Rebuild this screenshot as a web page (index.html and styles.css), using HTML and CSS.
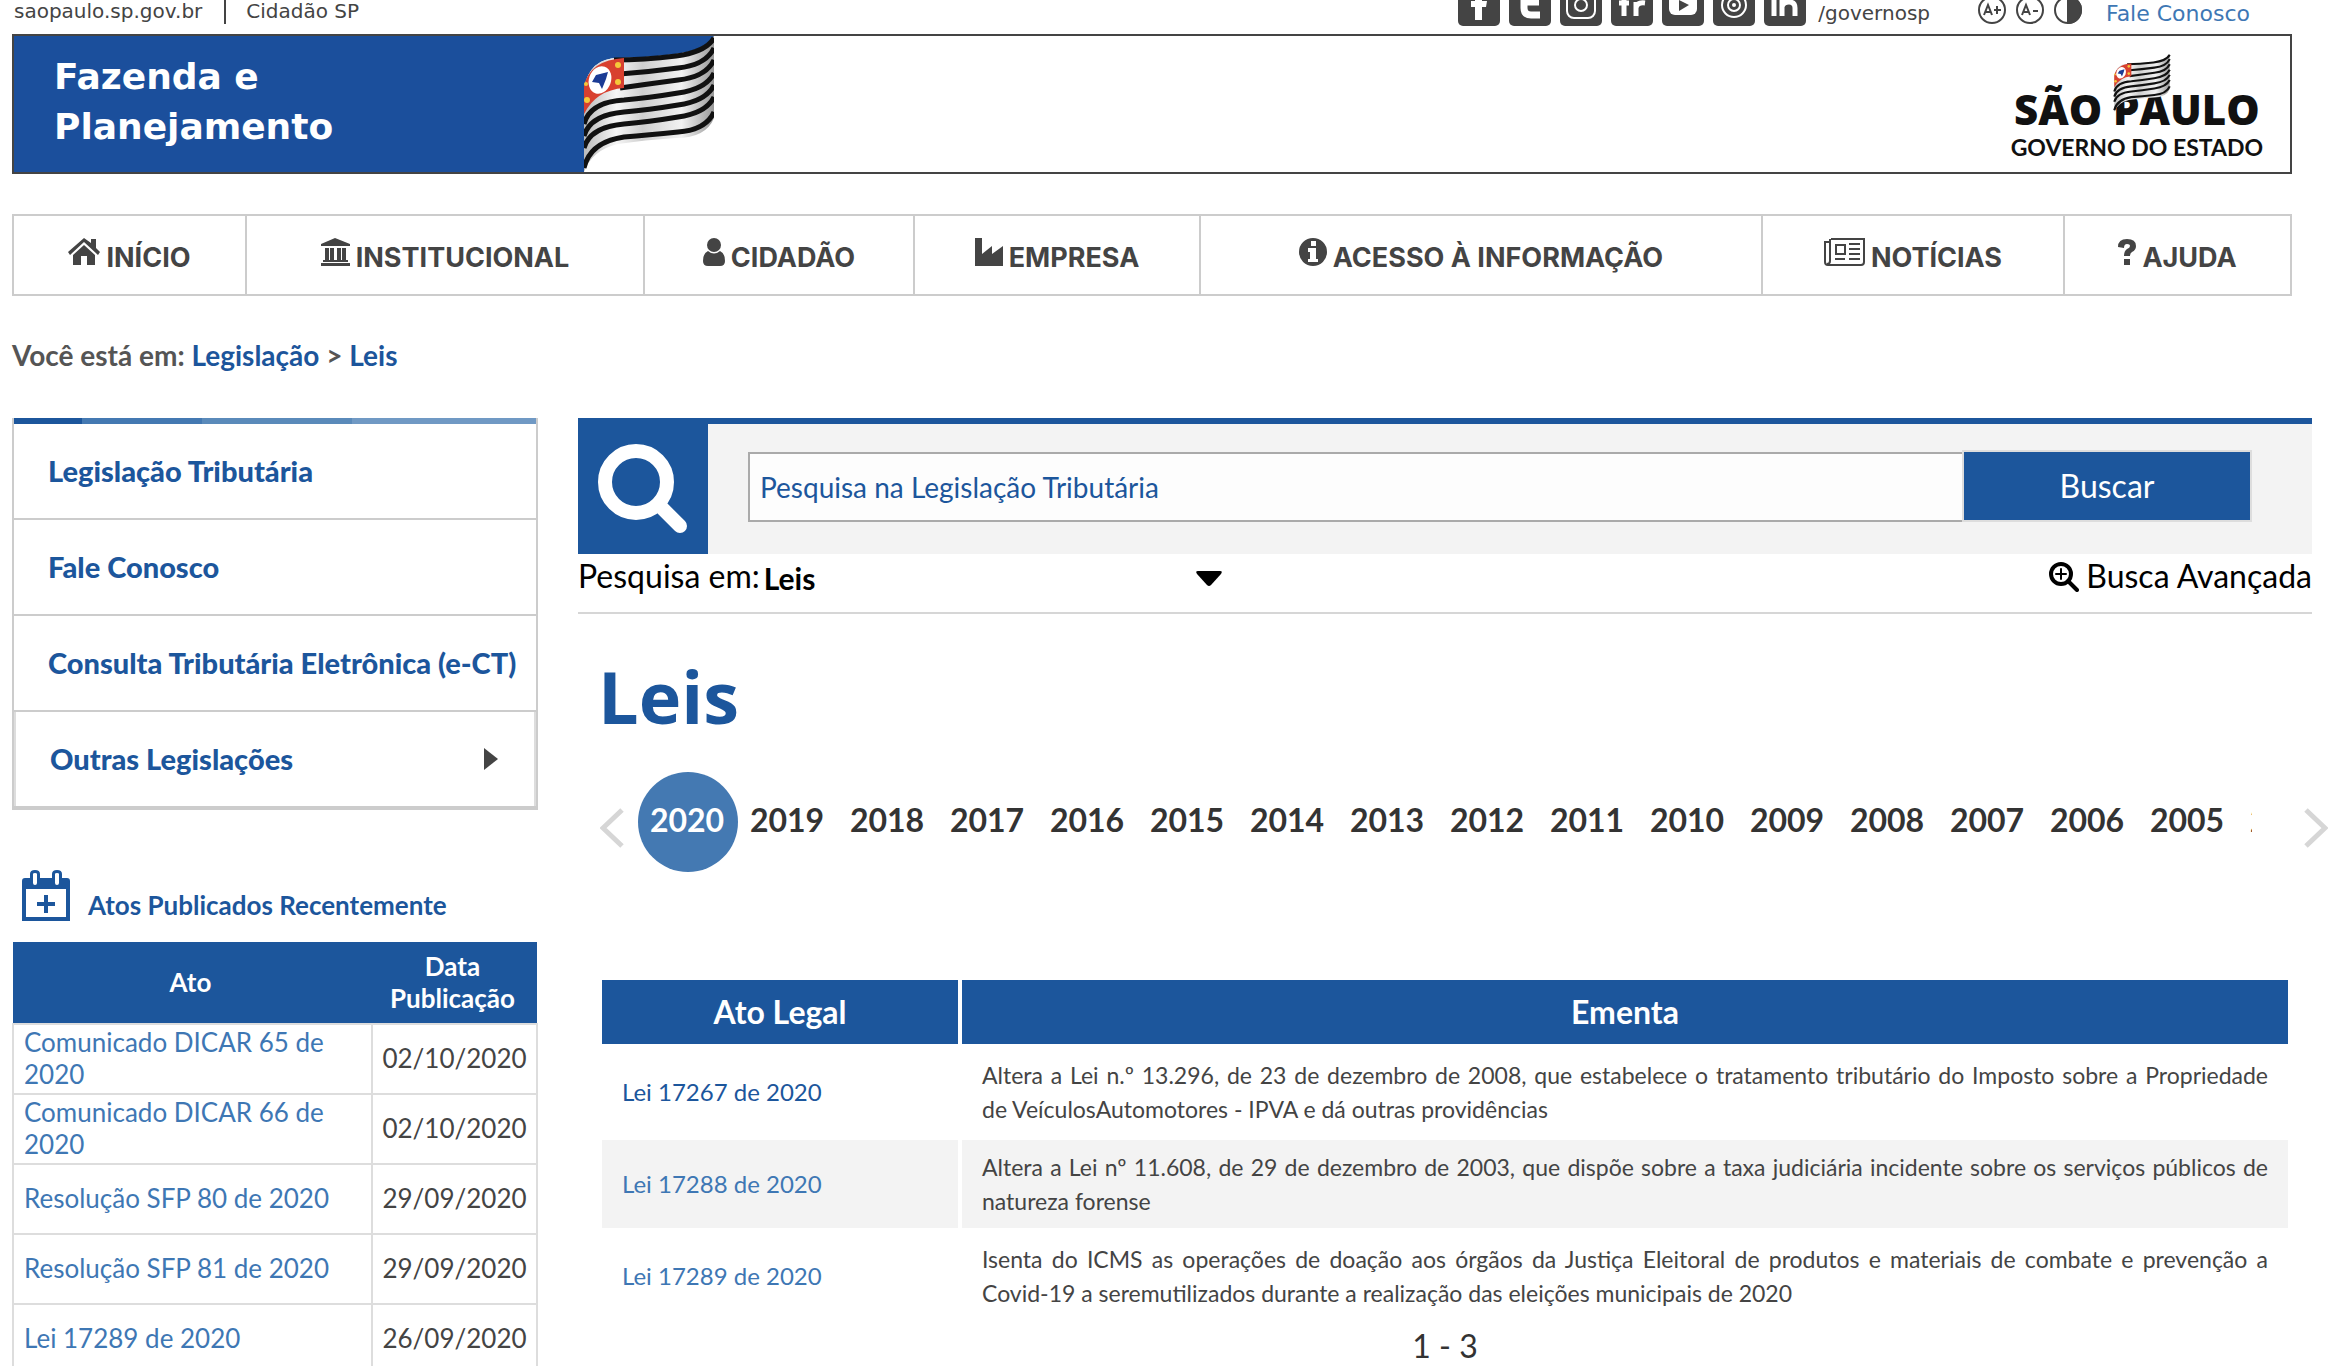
FILE: index.html
```html
<!DOCTYPE html>
<html lang="pt-BR">
<head>
<meta charset="utf-8">
<title>Leis - Legislação Tributária</title>
<link rel="stylesheet" href="styles.css">
</head>
<body>
<svg class="sprite" aria-hidden="true">
  <defs>
    <linearGradient id="cloth" x1="0" x2="1" y1="0" y2="0">
      <stop offset="0" stop-color="#bbb"/><stop offset=".25" stop-color="#f6f6f6"/><stop offset=".45" stop-color="#cfcfcf"/><stop offset=".75" stop-color="#f2f2f2"/><stop offset="1" stop-color="#999"/>
    </linearGradient>
    <symbol id="flag" viewBox="0 0 130 136">
      <path d="M0 136V52Q6 22 34 22Q60 22 92 18Q122 14 130 0V82Q122 102 92 102Q60 104 34 108Q8 114 0 136Z" fill="url(#cloth)"/>
      <g fill="none" stroke="#111" stroke-width="5">
        <path d="M30 24Q60 24 92 20Q122 16 130 2"/>
        <path d="M36 38Q64 36 94 32Q122 29 130 12"/>
        <path d="M36 52Q64 48 94 44Q122 41 130 24"/>
        <path d="M0 88Q6 66 40 64Q64 62 94 57Q122 53 130 37"/>
        <path d="M0 100Q6 79 40 76Q64 74 94 69Q122 65 130 49"/>
        <path d="M0 112Q6 91 40 88Q64 86 94 81Q122 77 130 61"/>
        <path d="M0 132Q6 106 40 101Q64 99 94 96Q122 94 130 76"/>
      </g>
      <path d="M0 78V50Q6 24 40 22V52Q12 54 0 78Z" fill="#d8402f"/>
      <ellipse cx="16" cy="44" rx="11" ry="14" fill="#fff" transform="rotate(20 16 44)"/>
      <path d="M8 46L12 39L24 36L22 43L18 53L15 47Z" fill="#1b3b94"/>
      <g fill="#f5c93a"><circle cx="34" cy="29" r="3"/><circle cx="34" cy="46" r="3"/><circle cx="3" cy="64" r="3"/><circle cx="2" cy="48" r="2"/></g>
    </symbol>
  </defs>
</svg>

<div class="topbar">
  <nav class="topbar-left">
    <a href="#">saopaulo.sp.gov.br</a>
    <a href="#" class="ruled">Cidadão SP</a>
  </nav>
  <div class="topbar-right">
    <div class="social">
      <a href="#" aria-label="Facebook"><svg viewBox="0 0 42 42"><rect width="42" height="42" rx="5"/><path class="w" d="M17 36V23h-4v-6h4v-4c0-5 3-7 7-7h5v6h-3c-2 0-2 1-2 2v3h5l-1 6h-4v13z"/></svg></a>
      <a href="#" aria-label="Twitter"><svg viewBox="0 0 42 42"><rect width="42" height="42" rx="5"/><path class="ws" d="M15 8v16q0 7 7 7h9M15 18h15"/></svg></a>
      <a href="#" aria-label="Instagram"><svg viewBox="0 0 42 42"><rect width="42" height="42" rx="5"/><rect class="wl" x="7" y="7" width="28" height="27" rx="7"/><circle class="wl" cx="21" cy="21" r="6"/></svg></a>
      <a href="#" aria-label="Flickr"><svg viewBox="0 0 42 42"><rect width="42" height="42" rx="5"/><path class="wm" d="M13 32V12q0-5 6-5M8 19h10M25 32V18M25 24q1-6 9-5"/></svg></a>
      <a href="#" aria-label="YouTube"><svg viewBox="0 0 42 42"><rect width="42" height="42" rx="5"/><rect class="w" x="7" y="9" width="28" height="22" rx="6"/><path d="M17 16v11l10-6z"/></svg></a>
      <a href="#" aria-label="Podcast"><svg viewBox="0 0 42 42"><rect width="42" height="42" rx="5"/><circle class="wl" cx="21" cy="21" r="12"/><circle class="wl" cx="21" cy="21" r="6"/><circle class="w" cx="21" cy="21" r="2"/></svg></a>
      <a href="#" aria-label="LinkedIn"><svg viewBox="0 0 42 42"><rect width="42" height="42" rx="5"/><path class="wm" d="M10 16v16M10 8v4M18 32V16M18 23q1-5 7-5 6 0 6 6v8"/></svg></a>
    </div>
    <span class="handle">/governosp</span>
    <div class="access">
      <button aria-label="Aumentar fonte"><svg viewBox="0 0 28 28"><circle cx="14" cy="14" r="13"/><path d="M6 19l4-10 4 10M8 16h5M16 14h7M19 10v8"/></svg></button>
      <button aria-label="Diminuir fonte"><svg viewBox="0 0 28 28"><circle cx="14" cy="14" r="13"/><path d="M6 19l4-10 4 10M8 16h5M17 15h5"/></svg></button>
      <button aria-label="Contraste"><svg viewBox="0 0 28 28"><circle cx="14" cy="14" r="13"/><path class="half" d="M14 1a13 13 0 0 1 0 26z"/></svg></button>
    </div>
    <a class="contact" href="#">Fale Conosco</a>
  </div>
</div>

<header class="banner">
  <div class="banner-title">Fazenda e<br>Planejamento</div>
  <svg class="banner-flag" viewBox="0 0 130 136"><path class="banner-fill" d="M0 0H130Q122 14 92 18Q60 22 34 22Q6 22 0 52Z"/><use href="#flag"/></svg>
  <div class="gov-logo">
    <svg class="gov-flag"><use href="#flag"/></svg>
    <span class="gov-name">SÃO PAULO</span>
    <span class="gov-sub">GOVERNO DO ESTADO</span>
  </div>
</header>

<nav class="mainnav">
  <a href="#"><svg width="32" height="28" viewBox="0 0 32 28"><path d="M16 0L0 14l2 3L16 4l14 13 2-3-4-4V1h-5v4zM16 7L5 17v10h8v-9h6v9h8V17z"/></svg>INÍCIO</a>
  <a href="#"><svg width="29" height="28" viewBox="0 0 29 28"><path d="M14 0L0 6v2h29V6zM4 10h4v12H4zM9 10h4v12H9zM16 10h4v12h-4zM21 10h4v12h-4zM2 22h25v2H2zM0 25h29v3H0z"/></svg>INSTITUCIONAL</a>
  <a href="#"><svg width="22" height="28" viewBox="0 0 22 28"><ellipse cx="11" cy="7" rx="7" ry="7"/><path d="M5 13q6 5 12 0 5 2 5 10 0 5-5 5H5q-5 0-5-5 0-8 5-10z"/></svg>CIDADÃO</a>
  <a href="#"><svg width="28" height="28" viewBox="0 0 28 28"><path d="M0 0h7v16l10-8v8l11-8v20H0z"/></svg>EMPRESA</a>
  <a href="#"><svg width="28" height="28" viewBox="0 0 28 28"><path fill-rule="evenodd" d="M14 0a14 14 0 1 1 0 28a14 14 0 0 1 0-28zM12 3v5h5V3zM9 10v4h2v7H9v3h10v-3h-2V10z"/></svg>ACESSO À INFORMAÇÃO</a>
  <a href="#"><svg width="41" height="28" viewBox="0 0 41 28"><path fill="none" stroke="currentColor" stroke-width="2" d="M7 1h33v23q0 3-3 3H4q-3 0-3-3V4h5M6 1v22q0 3-3 3M12 7h9v9h-9zM25 6h11M25 11h11M25 16h11M11 21h10M25 21h11"/></svg>NOTÍCIAS</a>
  <a href="#"><svg width="18" height="27" viewBox="0 0 18 27"><path d="M6 20h6v6H6zM0 8q0-8 9-8t9 7q0 4-4 6-2 1-2 4H6q0-5 3-7 3-1 3-3t-3-2q-3 0-3 4z"/></svg>AJUDA</a>
</nav>

<p class="crumbs">Você está em: <a href="#">Legislação</a> &gt; <a href="#">Leis</a></p>

<div class="layout">
  <aside class="sidebar">
    <nav class="sidenav">
      <div class="stripe"><i></i><i></i><i></i><i></i></div>
      <a href="#">Legislação Tributária</a>
      <a href="#">Fale Conosco</a>
      <a href="#">Consulta Tributária Eletrônica (e-CT)</a>
      <a href="#" class="more">Outras Legislações<svg width="14" height="22" viewBox="0 0 14 22"><path d="M0 0L14 11L0 22z"/></svg></a>
    </nav>

    <h2 class="recent-title">
      <svg width="48" height="52" viewBox="0 0 48 52"><path fill="none" stroke="currentColor" stroke-width="4" d="M2 16V49h44V16M24 25v18M15 34h18"/><path fill="currentColor" fill-rule="evenodd" d="M3 8h5V4q0-4 5-4t5 4v4h12V4q0-4 5-4t5 4v4h5q3 0 3 3v8H0v-8q0-3 3-3zM11 4v9q0 2 2 2t2-2V4q0-1-2-1t-2 1zM33 4v9q0 2 2 2t2-2V4q0-1-2-1t-2 1z"/></svg>
      <span>Atos Publicados Recentemente</span>
    </h2>
    <table class="recent">
      <thead><tr><th scope="col">Ato</th><th scope="col" class="date">Data Publicação</th></tr></thead>
      <tbody>
        <tr><td><a href="#">Comunicado DICAR 65 de 2020</a></td><td class="date">02/10/2020</td></tr>
        <tr><td><a href="#">Comunicado DICAR 66 de 2020</a></td><td class="date">02/10/2020</td></tr>
        <tr><td><a href="#">Resolução SFP 80 de 2020</a></td><td class="date">29/09/2020</td></tr>
        <tr><td><a href="#">Resolução SFP 81 de 2020</a></td><td class="date">29/09/2020</td></tr>
        <tr><td><a href="#">Lei 17289 de 2020</a></td><td class="date">26/09/2020</td></tr>
      </tbody>
    </table>
  </aside>

  <main class="content">
    <form class="search">
      <div class="search-icon"><svg width="90" height="90" viewBox="0 0 90 90"><circle cx="38" cy="38" r="31"/><path d="M61 61L82 82"/></svg></div>
      <div class="search-fields">
        <input type="text" aria-label="Pesquisa" placeholder="Pesquisa na Legislação Tributária">
        <button type="button">Buscar</button>
      </div>
    </form>
    <div class="scope">
      <label for="scope">Pesquisa em:</label>
      <div class="scope-pick">
        <select id="scope"><option>Leis</option></select>
        <svg width="26" height="15" viewBox="0 0 26 15"><path d="M2 0h22q3 0 1 3L15 14q-2 2-4 0L1 3q-2-3 1-3z"/></svg>
      </div>
      <a href="#" class="advanced"><svg width="30" height="30" viewBox="0 0 30 30"><circle cx="12" cy="12" r="10"/><path d="M19 19L28 28"/><path class="thin" d="M12 7v10M7 12h10"/></svg>Busca Avançada</a>
    </div>

    <h1>Leis</h1>

    <div class="years">
      <button aria-label="Anos seguintes"><svg width="24" height="40" viewBox="0 0 24 40"><path d="M22 2L3 20L22 38"/></svg></button>
      <ul>
        <li><a href="#" class="current">2020</a></li><li><a href="#">2019</a></li><li><a href="#">2018</a></li><li><a href="#">2017</a></li><li><a href="#">2016</a></li><li><a href="#">2015</a></li><li><a href="#">2014</a></li><li><a href="#">2013</a></li><li><a href="#">2012</a></li><li><a href="#">2011</a></li><li><a href="#">2010</a></li><li><a href="#">2009</a></li><li><a href="#">2008</a></li><li><a href="#">2007</a></li><li><a href="#">2006</a></li><li><a href="#">2005</a></li><li><a href="#">2004</a></li>
      </ul>
      <button aria-label="Anos anteriores"><svg width="24" height="40" viewBox="0 0 24 40"><path d="M2 2L21 20L2 38"/></svg></button>
    </div>

    <table class="laws">
      <thead><tr><th scope="col" class="act">Ato Legal</th><th scope="col">Ementa</th></tr></thead>
      <tbody>
        <tr><td><a href="#" class="hot">Lei 17267 de 2020</a></td><td class="summary">Altera a Lei n.º 13.296, de 23 de dezembro de 2008, que estabelece o tratamento tributário do Imposto sobre a Propriedade de&nbsp;VeículosAutomotores - IPVA e dá outras providências</td></tr>
        <tr><td><a href="#">Lei 17288 de 2020</a></td><td class="summary">Altera a Lei nº 11.608, de 29 de dezembro de 2003, que dispõe sobre a taxa judiciária incidente sobre os serviços públicos de natureza forense</td></tr>
        <tr><td><a href="#">Lei 17289 de 2020</a></td><td class="summary">Isenta do ICMS as operações de doação aos órgãos da Justiça Eleitoral de produtos e materiais de combate e prevenção a Covid-19 a seremutilizados durante a realização das eleições municipais de 2020</td></tr>
      </tbody>
    </table>
    <p class="range">1 - 3</p>
  </main>
</div>
</body>
</html>
```
FILE: styles.css
```css
* { box-sizing: border-box; }

html { overflow: hidden; }

body {
  margin: 0;
  padding: 0 36px 0 12px;
  background: #fff;
  color: #444;
  font-family: Lato, "Open Sans", sans-serif;
  font-size: 26px;
  line-height: 32px;
}

a { color: #3e77b4; text-decoration: none; }
button { padding: 0; border: 0; background: none; cursor: pointer; }
svg { display: block; flex: none; }
.sprite { position: absolute; width: 0; height: 0; }

/* Government bar */
.topbar {
  display: flex;
  justify-content: space-between;
  height: 34px;
  padding: 0 62px 0 2px;
  font-family: "DejaVu Sans", Verdana, sans-serif;
  font-size: 20px;
  line-height: 22px;
}
.topbar-left { display: flex; gap: 22px; }
.topbar-left a { color: #444; }
.topbar-left .ruled { height: 24px; padding-left: 20px; border-left: 2px solid #444; }
.topbar-right { display: flex; }
.social { display: flex; gap: 9px; height: 26px; align-items: flex-end; overflow: hidden; }
.social svg { width: 42px; height: 42px; }
.social rect, .social path { fill: #444; }
.social .w { fill: #fff; }
.social .ws, .social .wm, .social .wl { fill: none; stroke: #fff; stroke-width: 7; }
.social .wm { stroke-width: 5; }
.social .wl { stroke-width: 2; }
.handle { margin: 0 48px 0 12px; line-height: 26px; }
.access { display: flex; gap: 10px; height: 24px; align-items: flex-end; }
.access svg { width: 28px; height: 28px; fill: none; stroke: #444; stroke-width: 2; }
.access .half { fill: #444; }
.contact { margin-left: 24px; font-size: 22px; line-height: 28px; }

/* Banner */
.banner {
  display: flex;
  height: 140px;
  margin-right: 20px;
  border: 2px solid #444;
  margin-bottom: 40px;
}
.banner-title {
  width: 570px;
  padding: 16px 40px;
  background: #1b4f9c;
  color: #fff;
  font: bold 36px/50px "DejaVu Sans", Verdana, sans-serif;
}
.banner-flag { width: 130px; height: 136px; }
.banner-fill { fill: #1b4f9c; }
.gov-logo {
  position: relative;
  display: flex;
  flex-direction: column;
  align-items: center;
  margin-left: auto;
  margin-right: 27px;
  padding-top: 46px;
  color: #111;
}
.gov-name { font: 800 42px/54px "Open Sans", sans-serif; }
.gov-sub { font-size: 23px; line-height: 22px; font-weight: 700; }
.gov-flag { position: absolute; left: 102px; top: 18px; width: 58px; height: 58px; }

/* Main navigation */
.mainnav {
  display: grid;
  grid-template-columns: 231fr 398fr 270fr 286fr 562fr 302fr 227fr;
  height: 82px;
  margin-right: 20px;
  border: 2px solid #ccc;
}
.mainnav a {
  display: flex;
  justify-content: center;
  align-items: flex-end;
  gap: 6px;
  padding-bottom: 20px;
  color: #444;
  font-family: Inter, Lato, sans-serif;
  font-size: 27px;
  font-weight: 700;
  line-height: 32px;
}
.mainnav a + a { border-left: 2px solid #ccc; }
.mainnav svg { margin-bottom: 8px; fill: currentColor; }

.crumbs { margin: 43px 0 47px; font-size: 28px; line-height: 32px; font-weight: 700; color: #555; }
.crumbs a { color: #1c559b; }

/* Columns */
.layout { display: grid; grid-template-columns: 526px 1fr; gap: 40px; }

.sidenav { border: 2px solid #ccc; border-top: 0; border-bottom-width: 4px; }
.stripe { display: grid; grid-template-columns: 68fr 120fr 150fr 184fr; height: 6px; }
.stripe i:nth-child(1) { background: #1c569c; }
.stripe i:nth-child(2) { background: #4479b2; }
.stripe i:nth-child(3) { background: #5a8aba; }
.stripe i:nth-child(4) { background: #7099c4; }
.sidenav a {
  display: flex;
  align-items: center;
  justify-content: space-between;
  height: 96px;
  padding: 0 36px 0 34px;
  border-bottom: 2px solid #ccc;
  color: #1c569c;
  font-size: 29px;
  font-weight: 900;
  white-space: nowrap;
}
.sidenav .more { border: 2px solid #ddd; border-top: 0; border-bottom: 0; height: 94px; }
.more svg { fill: #444; }

.recent-title {
  display: flex;
  align-items: flex-end;
  gap: 18px;
  margin: 60px 0 20px;
  padding-left: 10px;
  color: #1c569c;
  font-size: 26px;
  line-height: 34px;
}
.recent { width: 100%; border-collapse: collapse; table-layout: fixed; }
.recent th { height: 82px; padding: 0 12px 2px 8px; background: #1c569c; color: #fff; font-weight: 700; }
.recent td { height: 70px; padding: 0 10px 2px; border: 2px solid #ddd; }
.recent .date { width: 165px; text-align: center; }
.recent td.date { padding: 0 0 2px; }

/* Search */
.search { display: flex; height: 136px; border-top: 6px solid #1c569c; background: #f3f3f3; }
.search-icon { width: 130px; padding: 20px; background: #1c569c; }
.search-icon svg { fill: none; stroke: #fff; stroke-width: 14; stroke-linecap: round; }
.search-fields { display: flex; flex: 1; padding: 26px 60px 32px 40px; }
.search-fields input {
  flex: 1;
  margin-top: 2px;
  padding: 0 10px;
  border: 2px solid #aaa;
  border-right: 0;
  background: #fdfdfd;
  font: 28px/32px Lato, sans-serif;
}
.search-fields input::placeholder { color: #1c569c; opacity: 1; }
.search-fields button {
  width: 290px;
  border: 2px solid #ddd;
  background: #1c569c;
  color: #fff;
  font: 32px/40px Lato, sans-serif;
}
.scope {
  display: flex;
  gap: 4px;
  height: 60px;
  border-bottom: 2px solid #d6d6d6;
  color: #000;
  font-size: 32px;
  line-height: 44px;
}
.scope-pick { display: flex; align-items: center; width: 458px; height: 48px; }
.scope-pick select {
  flex: 1;
  padding: 0;
  border: 0;
  background: none;
  appearance: none;
  color: #000;
  font: bold 30px/40px Lato, sans-serif;
}
.advanced { display: flex; gap: 7px; margin-left: auto; color: #000; }
.advanced svg { margin-top: 8px; fill: none; stroke: #000; stroke-width: 4; stroke-linecap: round; }
.advanced .thin { stroke-width: 2; }

h1 { margin: 39px 20px 0; color: #1c569c; font: bold 72px/86px "Open Sans", sans-serif; }

.years { display: flex; margin: 33px -16px 0 22px; }
.years button { display: flex; width: 38px; margin: 36px 0 0; }
.years button:last-child { justify-content: flex-end; }
.years svg { fill: none; stroke: #d6d6d6; stroke-width: 5; }
.years ul { display: flex; flex: 1; width: 0; margin: 0 38px 0 0; padding: 0; overflow: hidden; list-style: none; }
.years li a {
  display: block;
  width: 100px;
  height: 100px;
  padding-right: 2px;
  color: #333;
  font-size: 32px;
  font-weight: 700;
  line-height: 96px;
  text-align: center;
}
.years li .current { border-radius: 50%; background: #4479b2; color: #fff; }

.laws { width: calc(100% - 40px); margin: 104px 20px 0; border-spacing: 4px; font-size: 24px; line-height: 34px; }
.laws th { height: 64px; padding: 0; background: #1c569c; color: #fff; font-size: 32px; }
.laws .act { width: 356px; }
.laws td { padding: 10px 20px; }
.laws .summary { font-size: 23px; text-align: justify; }
.laws tr:nth-child(even) td { background: #f3f3f3; }
.laws .hot { color: #1c569c; }
.range { margin: 2px 0 0; color: #333; font-size: 32px; line-height: 40px; text-align: center; }
```
